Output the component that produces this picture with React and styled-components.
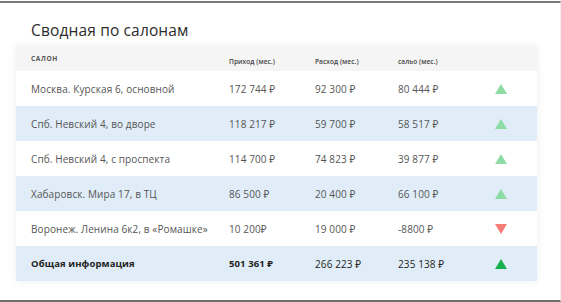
import React from 'react'
import styled, { createGlobalStyle } from 'styled-components'

const GlobalStyle = createGlobalStyle`
  html, body {
    margin: 0;
    padding: 0;
    background: #fff;
  }
  body {
    font-family: "Open Sans", "Noto Sans", "DejaVu Sans", sans-serif;
  }
`

const Frame = styled.div`
  box-sizing: border-box;
  width: 561px;
  margin-top: 1px;
  height: 301px;
  border-top: 2px solid #7a7a7a;
  border-bottom: 2px solid #6e6e6e;
  border-right: 1px solid #f0f0f0;
  padding: 0 23px 0 16px;
`

const Title = styled.h2`
  margin: 0;
  padding: 16px 0 0 15px;
  height: 27px;
  font-size: 15.5px;
  font-weight: 500;
  color: #2b2b2b;
  letter-spacing: 0.15px;
`

const Table = styled.div`
  box-shadow: 0 0 8px rgba(0, 0, 0, 0.07);
`

const Row = styled.div`
  display: grid;
  grid-template-columns: 198px 86px 83px 97px 1fr;
  align-items: center;
  height: ${p => p.$h || 35}px;
  padding-left: 15px;
  background: ${p => p.$bg || '#fff'};
  color: ${p => (p.$strong ? '#222' : '#555')};
  font-size: 10px;
  letter-spacing: 0.1px;
`

const HeadCell = styled.div`
  font-size: 6.6px;
  font-weight: ${p => (p.$caps ? 700 : 600)};
  letter-spacing: ${p => (p.$caps ? 0.6 : 0.05)}px;
  text-transform: ${p => (p.$caps ? 'uppercase' : 'none')};
  color: ${p => (p.$caps ? '#555' : '#444')};
  padding-top: ${p => (p.$caps ? 0 : 5)}px;
`

const Cell = styled.div`
  white-space: nowrap;
  font-weight: ${p => (p.$bold ? 700 : 400)};
  font-size: ${p => (p.$bold ? 9.5 : 10)}px;
`

const Arrow = styled.div`
  width: 0;
  height: 0;
  border-left: 6px solid transparent;
  border-right: 6px solid transparent;
  ${p =>
    p.$down
      ? `border-top: 10px solid ${p.$color};`
      : `border-bottom: 10px solid ${p.$color};`}
`

const rows = [
  ['Москва. Курская 6, основной', '172 744 ₽', '92 300 ₽', '80 444 ₽', 'up'],
  ['Спб. Невский 4, во дворе', '118 217 ₽', '59 700 ₽', '58 517 ₽', 'up'],
  ['Спб. Невский 4, с проспекта', '114 700 ₽', '74 823 ₽', '39 877 ₽', 'up'],
  ['Хабаровск. Мира 17, в ТЦ', '86 500 ₽', '20 400 ₽', '66 100 ₽', 'up'],
  ['Воронеж. Ленина 6к2, в «Ромашке»', '10 200₽', '19 000 ₽', '-8800 ₽', 'down'],
]

const arrowColor = {
  up: '#8ddca6',
  down: '#f77b76',
  total: '#16b04f',
}

export default function App() {
  return (
    <>
      <GlobalStyle />
      <Frame>
        <Title>Сводная по салонам</Title>
        <Table>
          <Row $h={25} $bg="#f5f5f5">
            <HeadCell $caps>Салон</HeadCell>
            <HeadCell>Приход (мес.)</HeadCell>
            <HeadCell>Расход (мес.)</HeadCell>
            <HeadCell>сальо (мес.)</HeadCell>
          </Row>
          {rows.map((r, i) => (
            <Row key={r[0]} $bg={i % 2 ? '#e0edf8' : '#fff'}>
              <Cell>{r[0]}</Cell>
              <Cell>{r[1]}</Cell>
              <Cell>{r[2]}</Cell>
              <Cell>{r[3]}</Cell>
              <Arrow $down={r[4] === 'down'} $color={arrowColor[r[4]]} />
            </Row>
          ))}
          <Row $bg="#e0edf8" $strong>
            <Cell $bold>Общая информация</Cell>
            <Cell $bold>501 361 ₽</Cell>
            <Cell>266 223 ₽</Cell>
            <Cell>235 138 ₽</Cell>
            <Arrow $color={arrowColor.total} />
          </Row>
        </Table>
      </Frame>
    </>
  )
}
